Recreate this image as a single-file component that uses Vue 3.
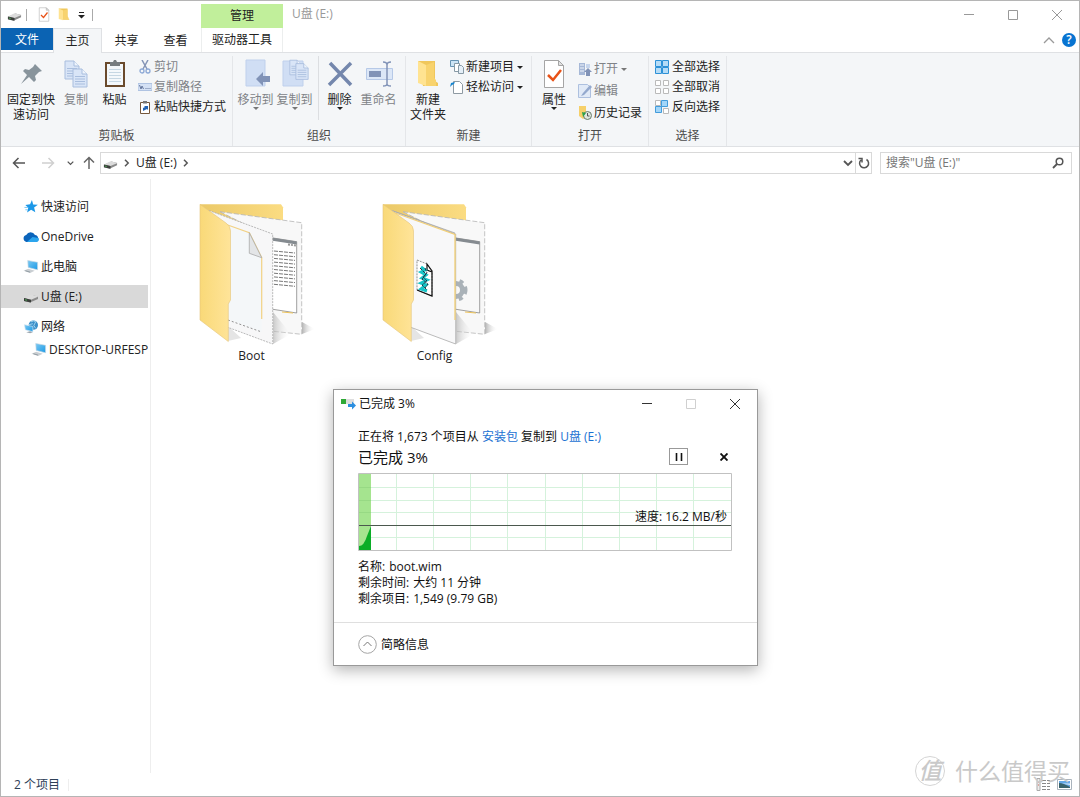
<script setup>
import { ref } from 'vue'

const activeTab = ref('主页')
const tabs = ['主页', '共享', '查看']
const search = ref('')
const selected = ref('U盘 (E:)')
const places = [
  { name: '快速访问', icon: 'star' },
  { name: 'OneDrive', icon: 'cloud' },
  { name: '此电脑', icon: 'pc' },
  { name: 'U盘 (E:)', icon: 'drive' },
  { name: '网络', icon: 'net' },
  { name: 'DESKTOP-URFESPO', icon: 'pc', child: true }
]
const columns = [38, 75, 112, 149, 187, 224, 261, 298, 335]
const rows = [14, 27, 39, 64]
const lines = [0, 1, 2, 3, 4, 5, 6, 7, 8, 9]
</script>

<template>
  <div class="window">
    <svg class="symbols" aria-hidden="true">
      <defs>
        <linearGradient id="cover" x1="0" x2="1"><stop offset="0" stop-color="#f9d978" /><stop offset="1" stop-color="#ffe499" /></linearGradient>
        <linearGradient id="back" x1="0" x2="1"><stop offset="0" stop-color="#ebc968" /><stop offset="1" stop-color="#fbdc82" /></linearGradient>
        <linearGradient id="shade" x1="0" x2="1"><stop offset="0" stop-color="#b4b4b4" /><stop offset="1" stop-color="#ffffff" stop-opacity="0" /></linearGradient>
        <linearGradient id="screen" x1="0" x2="1" y2="1"><stop offset="0" stop-color="#7cc9f2" /><stop offset="1" stop-color="#1c9ae6" /></linearGradient>
      </defs>
      <symbol id="drive" viewBox="0 0 16 14">
        <path d="M1 9 9 5.500l6 1.500v2.500L7 13 1 11.500z" fill="#8b8b8b" />
        <path d="M1 8.500 8 5l7.500 2L8 10.200z" fill="#dcdcdc" />
        <path d="M1 8.500 8 10.200V13l-7-1.600z" fill="#3b3f3b" />
        <path d="M2 10.200l2 .5" stroke="#4fae58" />
      </symbol>
      <symbol id="star" viewBox="0 0 16 16">
        <path d="M9 1l1.300 4.800 5 .2-4 3.100 1.300 5-4.500-2.700-4.300 3 1.300-5.200L2 6.300l5-.6z" fill="#1b98e8" />
        <path d="M1 9h4M2 11.500h2.500" stroke="#75c4f4" />
      </symbol>
      <symbol id="cloud" viewBox="0 0 16 14">
        <path d="M3.500 12.500a3.600 3.600 0 0 1-.3-7A5 5 0 0 1 12 5.500a3.600 3.600 0 0 1 .7 7z" fill="#0b64bb" />
        <path d="M4 12.500 9.500 7.500l6 1A2.600 2.600 0 0 1 13 12.500z" fill="#2ba5ed" />
      </symbol>
      <symbol id="pc" viewBox="0 0 16 16">
        <path d="M4.500 1.500 15 3.500v8L5 9z" fill="url(#screen)" stroke="#c8d8e2" stroke-width=".7" />
        <path d="M0 12.500l5-2 7 2-5 2.500z" fill="#c9ced2" />
        <path d="M2 12.500l5 1.500" stroke="#8d979f" />
      </symbol>
      <symbol id="net" viewBox="0 0 16 16">
        <circle cx="10.500" cy="6.500" r="5" fill="#3b8fc9" />
        <path d="M8 3q3-2 5 0l-2 4 2 3M6 6l4-1" stroke="#a5d5ef" fill="none" />
        <path d="M1 6l9 2v5.500L2 11.500z" fill="url(#screen)" stroke="#d2e4ef" stroke-width=".7" />
        <path d="M3 14l4-1 3 1-3 1.300z" fill="#9aa5ad" />
      </symbol>
      <symbol id="folder" viewBox="0 0 16 16">
        <path d="M2 1h10v11l2 1v1H6z" fill="#efc75b" />
        <path d="M2 1l5 2.500v11L2 13z" fill="#ffe391" />
        <path d="M7 3.500 12 2v8l1 1v2.500H7z" fill="#f8d36e" />
      </symbol>
      <symbol id="tick" viewBox="0 0 24 30">
        <path d="M2.500 1.500h14l5 5v22h-19z" fill="#fff" stroke="#a5a5a5" />
        <path d="M16.500 1.500v5h5z" fill="#e2e2e2" stroke="#a5a5a5" />
        <path d="M6 16l5 5 8-10" fill="none" stroke="#e85218" stroke-width="2.500" />
      </symbol>
      <symbol id="page" viewBox="0 0 16 20">
        <path d="M1 1h9l5 5v13H1z" fill="#d9e5f7" stroke="#a9bede" />
        <path d="M10 1v5h5" fill="#eef4fc" stroke="#a9bede" />
        <path d="M3 8.500h10M3 11h10M3 13.500h10M3 16h10" stroke="#a9bede" />
      </symbol>
      <symbol id="chev" viewBox="0 0 8 8"><path d="M2 .8 5.200 4 2 7.200" fill="none" stroke="currentColor" stroke-width="1.500" /></symbol>
      <symbol id="down" viewBox="0 0 10 8"><path d="M1 2l4 4 4-4" fill="none" stroke="currentColor" stroke-width="1.800" /></symbol>
      <symbol id="min" viewBox="0 0 12 12"><path d="M1 5.500h10" stroke="currentColor" /></symbol>
      <symbol id="max" viewBox="0 0 12 12"><path d="M1.500 1.500h9v9h-9z" fill="none" stroke="currentColor" /></symbol>
      <symbol id="close" viewBox="0 0 12 12"><path d="M1 1l10 10M11 1 1 11" stroke="currentColor" /></symbol>
    </svg>

    <header class="titlebar">
      <div class="quick">
        <svg width="15" height="14"><use href="#drive" /></svg>
        <i class="bar first"></i>
        <button aria-label="属性"><svg width="12" height="15"><use href="#tick" /></svg></button>
        <button aria-label="新建文件夹"><svg width="14" height="15"><use href="#folder" /></svg></button>
        <button aria-label="自定义快速访问工具栏"><svg width="7" height="8" viewBox="0 0 7 8"><path d="M1 1h5v1H1zM0 4h7L3.500 7.500z" fill="#222" /></svg></button>
        <i class="bar"></i>
      </div>
      <div class="context">管理</div>
      <h1>U盘 (E:)</h1>
      <div class="controls">
        <button aria-label="最小化"><svg width="12" height="12"><use href="#min" /></svg></button>
        <button aria-label="最大化"><svg width="12" height="12"><use href="#max" /></svg></button>
        <button aria-label="关闭"><svg width="12" height="12"><use href="#close" /></svg></button>
      </div>
    </header>

    <nav class="tabs">
      <button class="file">文件</button>
      <button v-for="t in tabs" :key="t" class="tab" :class="{ active: activeTab === t }" @click="activeTab = t">{{ t }}</button>
      <button class="tool">驱动器工具</button>
      <div class="help">
        <button aria-label="折叠功能区"><svg width="12" height="8" viewBox="0 0 12 8"><path d="M1 7l5-5 5 5" fill="none" stroke="#9a9a9a" stroke-width="1.300" /></svg></button>
        <button class="question" aria-label="帮助">?</button>
      </div>
    </nav>

    <section class="ribbon">
      <div class="group">
        <div class="tools">
          <button class="big wide">
            <svg viewBox="0 0 30 30"><path d="M19 5l7 7-3 1-4 4 1 4-2 2-5-5-8 7 6-9-4-4 2-2 4 1 4-3z" fill="#88949c" /></svg>
            <span>固定到快<br />速访问</span>
          </button>
          <button class="big narrow off">
            <svg viewBox="0 0 30 30"><use href="#page" x="3" y="1" width="16" height="20" /><use href="#page" x="11" y="9" width="16" height="20" /></svg>
            <span>复制</span>
          </button>
          <button class="big paste">
            <svg viewBox="0 0 30 30"><path d="M6 4h18v23H6z" fill="#f4f8fb" stroke="#6a4a2c" stroke-width="2" /><path d="M9 10.500h12M9 13.500h12M9 16.500h12M9 19.500h12M9 22.500h12" stroke="#c6d7e3" /><path d="M10 3h3l1-2h2l1 2h3v4H10z" fill="#777d80" /></svg>
            <span>粘贴</span>
          </button>
          <div class="stack">
            <button class="small off"><svg viewBox="0 0 14 14"><path d="M4 0l5 9M10 0 5 9" stroke="#8494b6" stroke-width="1.500" /><circle cx="4" cy="11" r="2" fill="none" stroke="#8da9d6" stroke-width="1.300" /><circle cx="10" cy="11" r="2" fill="none" stroke="#8da9d6" stroke-width="1.300" /></svg>剪切</button>
            <button class="small off"><svg viewBox="0 0 14 14"><path d="M0 3.500h14v7H0z" fill="#d4e1f5" stroke="#afc3e2" /><path d="M1.500 5l1.500 4 1-3 1.500 3M7.500 8.500h1M9.500 8.500h1M11.500 8.500h1" fill="none" stroke="#66789e" /></svg>复制路径</button>
            <button class="small"><svg viewBox="0 0 14 14"><path d="M2.500 2.500h9v11h-9z" fill="#fff" stroke="#76583c" /><path d="M5 1h4v2.500H5z" fill="#777" /><path d="M5 11V8l2-1-1-1h4v4L9 9z" fill="#2464b4" /></svg>粘贴快捷方式</button>
          </div>
        </div>
        <footer>剪贴板</footer>
      </div>

      <div class="group organize">
        <div class="tools">
          <button class="big off">
            <svg viewBox="0 0 30 30"><path d="M5 1h19v26H5z" fill="#d0def4" stroke="#bfd0ec" /><path d="M15 20l7-7v4h7v6h-7v4z" fill="#8193b7" /></svg>
            <span>移动到</span><b></b>
          </button>
          <button class="big off">
            <svg viewBox="0 0 30 30"><path d="M3 2h20v25H3z" fill="#d0def4" stroke="#bfd0ec" /><use href="#page" x="9" y="0" width="13" height="17" /><use href="#page" x="15" y="3" width="14" height="19" /></svg>
            <span>复制到</span><b></b>
          </button>
          <i class="divider"></i>
          <button class="big">
            <svg viewBox="0 0 30 30"><path d="M5 4l21 22M26 4 4 26" stroke="#7487ad" stroke-width="3.500" /></svg>
            <span>删除</span><b></b>
          </button>
          <button class="big off">
            <svg viewBox="0 0 30 30"><path d="M2.500 9.500h26v11h-26z" fill="#dce7f7" stroke="#b6c9e7" /><path d="M5 12h12v6H5z" fill="#8193b7" /><path d="M19 3q4 0 4 3v19q0 2-4 2M27 3q-4 0-4 3v19q0 2 4 2" fill="none" stroke="#8193b7" stroke-width="1.500" /></svg>
            <span>重命名</span>
          </button>
        </div>
        <footer>组织</footer>
      </div>

      <div class="group">
        <div class="tools">
          <button class="big create">
            <svg viewBox="0 0 30 30"><path d="M5 2h17v20l3 2v3H10z" fill="#f0c75c" /><path d="M5 2l8 4v21l-8-3z" fill="#ffe391" /><path d="M13 6l8-3v16l2 2v6H13z" fill="#f8d36e" /></svg>
            <span>新建<br />文件夹</span>
          </button>
          <div class="stack">
            <button class="small"><svg viewBox="0 0 14 14"><path d="M.5.5h8v6h-8z" fill="#cce4f5" stroke="#6793b2" /><path d="M4.500 3.500h5v8h-5z" fill="#fff" stroke="#8799a5" /><path d="M8.500 5.500h3l2 2v6h-5z" fill="#e5eff8" stroke="#8799a5" /></svg>新建项目<b></b></button>
            <button class="small"><svg viewBox="0 0 14 14"><path d="M3.500 1.500h6l3 3v9h-9z" fill="#fff" stroke="#8e9aa3" /><path d="M0 7l1-4 4-1-1 2-2 1z" fill="#1685d0" /></svg>轻松访问<b></b></button>
          </div>
        </div>
        <footer>新建</footer>
      </div>

      <div class="group">
        <div class="tools">
          <button class="big create"><svg viewBox="0 0 24 30"><use href="#tick" /></svg><span>属性</span><b></b></button>
          <div class="stack loose">
            <button class="small off"><svg viewBox="0 0 14 14"><path d="M1 1h6v12H1z" fill="#a6b8d7" /><path d="M2 3h4M2 6h4M2 9h4" stroke="#eff4fb" /><path d="M8 2h4v4H8z" fill="#c7d6ed" /><path d="M6 10l4-4 4 4h-2v4H8v-4z" fill="#8193b7" /></svg>打开<b></b></button>
            <button class="small off"><svg viewBox="0 0 14 14"><path d="M.5.500h9l3 3v10H.5z" fill="#e1eaf7" stroke="#adc0df" /><path d="M3 12l2-3 7-8 2 2-8 8z" fill="#94a9ce" /></svg>编辑</button>
            <button class="small"><svg viewBox="0 0 14 14"><path d="M1 0h7v11l-3 2-4-3z" fill="#f6d06a" /><circle cx="9.500" cy="9.500" r="4" fill="#dfe6df" stroke="#687c6a" /><path d="M9.500 7v3h2" fill="none" stroke="#555" /><path d="M4 6l4 1-3 4z" fill="#2ba14b" /></svg>历史记录</button>
          </div>
        </div>
        <footer>打开</footer>
      </div>

      <div class="group">
        <div class="tools select">
          <div class="stack">
            <button class="small"><svg viewBox="0 0 14 14"><path d="M.5.500h6v6h-6zM7.500.500h6v6h-6zM.5 7.500h6v6h-6zM7.500 7.500h6v6h-6z" fill="#b5dcf7" stroke="#2d91d7" /></svg>全部选择</button>
            <button class="small"><svg viewBox="0 0 14 14"><path d="M.5.500h5v5h-5zM8.500.500h5v5h-5zM.5 8.500h5v5h-5zM8.500 8.500h5v5h-5z" fill="#fff" stroke="#bababa" /></svg>全部取消</button>
            <button class="small"><svg viewBox="0 0 14 14"><path d="M.5.500h5v5h-5zM8.500 8.500h5v5h-5z" fill="#fff" stroke="#bababa" /><path d="M6.500.500h6v6h-6zM.5 6.500h6v6h-6z" fill="#a3d6f9" stroke="#439cdb" /></svg>反向选择</button>
          </div>
        </div>
        <footer>选择</footer>
      </div>
    </section>

    <div class="address">
      <button aria-label="后退"><svg width="14" height="12" viewBox="0 0 14 12"><path d="M13 6H1.500M6.500 1l-5 5 5 5" fill="none" stroke="#555" stroke-width="1.500" /></svg></button>
      <button aria-label="前进"><svg width="14" height="12" viewBox="0 0 14 12"><path d="M1 6h11.500M7.500 1l5 5-5 5" fill="none" stroke="#d0d0d0" stroke-width="1.500" /></svg></button>
      <button class="recent" aria-label="最近位置"><svg width="7" height="6"><use href="#down" /></svg></button>
      <button class="up" aria-label="上移"><svg width="12" height="14" viewBox="0 0 12 14"><path d="M6 13V1.500M1 6.500l5-5 5 5" fill="none" stroke="#666" stroke-width="1.500" /></svg></button>
      <div class="path">
        <svg width="15" height="14"><use href="#drive" /></svg>
        <svg width="8" height="8"><use href="#chev" /></svg>
        <a href="#">U盘 (E:)</a>
        <svg width="8" height="8"><use href="#chev" /></svg>
        <button class="drop" aria-label="历史地址"><svg width="10" height="8"><use href="#down" /></svg></button>
        <button class="refresh" aria-label="刷新"><svg width="12" height="12" viewBox="0 0 12 12"><path d="M8.500 2.500a4.500 4.500 0 1 1-5.500.5M.5 1.500H4v4" fill="none" stroke="#555" stroke-width="1.500" /></svg></button>
      </div>
      <label class="search">
        <input v-model="search" type="text" placeholder="搜索&quot;U盘 (E:)&quot;" aria-label="搜索" />
        <svg width="12" height="12" viewBox="0 0 12 12"><circle cx="7.500" cy="4.500" r="3.300" fill="none" stroke="#555" stroke-width="1.500" /><path d="M5 7 1 11" stroke="#555" stroke-width="1.800" /></svg>
      </label>
    </div>

    <main class="body">
      <aside class="side">
        <button v-for="p in places" :key="p.name" class="place" :class="{ child: p.child, current: selected === p.name }" @click="selected = p.name">
          <svg width="16" height="15"><use :href="'#' + p.icon" /></svg><span>{{ p.name }}</span>
        </button>
      </aside>
      <section class="files">
        <figure>
          <svg width="124" height="146" viewBox="0 0 124 146">
            <path d="M112 120l13 7-13 5z" fill="url(#shade)" />
            <path d="M38 124l13 12-13 3z" fill="#e5e5e5" />
            <path d="M10 2.300h81l2 3V40H30z" fill="url(#back)" />
            <path d="M30 9.700l81.700 11v111.600L80 129V35z" fill="#f8f8f8" stroke="#b5b5b5" stroke-width=".8" stroke-dasharray="5 2" />
            <path d="M83 110l18 22-18 10z" fill="url(#shade)" opacity=".7" />
            <path d="M81 35.700l25.700 4V111L81 107z" fill="#fff" stroke="#888" stroke-width=".8" />
            <path d="M81 35.500l25.700 4v3L81 38.500z" fill="#858b90" />
            <path d="M98 42.500l8 1" stroke="#999" stroke-width="2" stroke-dasharray="2 1" />
            <path v-for="n in lines" :key="n" :d="`M84 ${49 + n * 3.700}l21 2`" stroke="#777" stroke-width="1" stroke-dasharray="4 1" />
            <path d="M92 110l11 1" stroke="#efc45a" />
            <path d="M19 8.500 82.700 32v110L37 125z" fill="#f7f7f8" stroke="#a9a9a9" stroke-width=".8" stroke-dasharray="2 1" />
            <path d="M35 22l24.300 8.700 12.400 25V130L38 117z" fill="#f4f7f9" />
            <path d="M38 118l33.700 12" stroke="#777" stroke-width=".8" stroke-dasharray="2 2" />
            <path d="M35 22l24.300 8.700 12.400 25V117" fill="none" stroke="#f2d183" stroke-width="1.200" />
            <path d="M59.300 30.700v20.600l12.400 4.400z" fill="#e3e5e7" stroke="#aaa" stroke-width=".8" />
            <path d="M10 2.300 36 21q4.500 3 4.500 8v69l-2.200 4v37.500L10 118z" fill="url(#cover)" stroke="#e4c57b" stroke-width=".6" />
          </svg>
          <figcaption>Boot</figcaption>
        </figure>
        <figure>
          <svg width="124" height="146" viewBox="0 0 124 146">
            <path d="M112 120l13 7-13 5z" fill="url(#shade)" />
            <path d="M38 124l13 12-13 3z" fill="#e5e5e5" />
            <path d="M10 2.300h81l2 3V40H30z" fill="url(#back)" />
            <path d="M30 9.700l81.700 11v111.600L80 129V35z" fill="#f8f8f8" stroke="#b5b5b5" stroke-width=".8" stroke-dasharray="5 2" />
            <path d="M83 110l18 22-18 10z" fill="url(#shade)" opacity=".7" />
            <path d="M81 35.700l25.700 4V111L81 107z" fill="#f8f8f8" stroke="#888" stroke-width=".8" />
            <path d="M81 35.500l25.700 4v3L81 38.500z" fill="#858b90" />
            <circle cx="83" cy="88" r="6.500" fill="none" stroke="#aab2b8" stroke-width="5" />
            <circle cx="83" cy="88" r="9.500" fill="none" stroke="#aab2b8" stroke-width="4" stroke-dasharray="4 4" />
            <path d="M92 110l11 1" stroke="#efc45a" />
            <path d="M19 8.500 82.700 32v110L37 125z" fill="#f8f8f9" stroke="#a9a9a9" stroke-width=".8" />
            <path d="M21 10.500l61 22V118" fill="none" stroke="#f2cf76" stroke-width="1.300" />
            <path d="M20 9l62 22" stroke="#aaa" stroke-width=".8" />
            <path d="M44 58l10 4 5 8v24l-15-6z" fill="#fff" stroke="#777" stroke-width=".8" stroke-dasharray="2 1" />
            <path d="M44 88l15 6V69l-5-7v6l5 2" fill="none" stroke="#111" stroke-width="1.200" />
            <path d="M48 65l4 3-4 2 5 3-4 3 5 2-6 3 5 2-5 4 6 2" fill="none" stroke="#16c5c8" stroke-width="3" />
            <path d="M47 66l6 6-3 3 4 4-5 4 5 5M52 66l2 5-5 6 6 5-3 4" fill="none" stroke="#223" stroke-width=".9" stroke-dasharray="3 1" />
            <path d="M10 2.300 36 21q4.500 3 4.500 8v69l-2.200 4v37.500L10 118z" fill="url(#cover)" stroke="#e4c57b" stroke-width=".6" />
          </svg>
          <figcaption>Config</figcaption>
        </figure>
      </section>
    </main>

    <footer class="status">
      <span class="count">2 个项目</span>
      <div class="views">
        <button aria-label="详细信息"><svg width="15" height="13" viewBox="0 0 15 13"><path d="M1 .500h3v12H1z" fill="#eee" stroke="#aaa" /><path d="M2 4h1M2 7h1" stroke="#d06050" /><path d="M6 2.500h4M11 2.500h3M6 5.500h4M11 5.500h3M6 8.500h4M11 8.500h3M6 11.500h4M11 11.500h3" stroke="#888" /></svg></button>
        <button aria-label="大图标"><svg width="15" height="13" viewBox="0 0 15 13"><path d="M.5 1.500h14v10H.5z" fill="#fff" stroke="#aab4bd" /><path d="M2 3h11v7H2z" fill="#63a7e6" /><path d="M2 5q4 0 11 4v1H2z" fill="#39626a" /><path d="M5 5.500h8V7z" fill="#ddecf7" /></svg></button>
      </div>
    </footer>

    <div class="watermark"><span class="seal">值</span><span>什么值得买</span></div>

    <section class="dialog" role="dialog" aria-label="已完成 3%">
      <header>
        <svg width="15" height="12" viewBox="0 0 15 12"><path d="M0 1h5v5H0z" fill="#2fa936" /><path d="M5 1h8v5H5z" fill="#dedede" /><path d="M7 6h4V3.500l4 4-4 4V9H7z" fill="#2d8fe0" /></svg>
        <h2>已完成 3%</h2>
        <div class="controls">
          <button aria-label="最小化"><svg width="12" height="12"><use href="#min" /></svg></button>
          <button class="faint" disabled aria-label="最大化"><svg width="12" height="12"><use href="#max" /></svg></button>
          <button aria-label="关闭"><svg width="12" height="12"><use href="#close" /></svg></button>
        </div>
      </header>
      <div class="content">
        <p class="summary">正在将 1,673 个项目从 <a href="#">安装包</a> 复制到 <a href="#">U盘 (E:)</a></p>
        <div class="progress">
          <strong>已完成 3%</strong>
          <button class="pause" aria-label="暂停"><svg width="8" height="8" viewBox="0 0 8 8"><path d="M1.500 0v8M6.500 0v8" stroke="#111" stroke-width="1.600" /></svg></button>
          <button class="cancel" aria-label="取消"><svg width="8" height="8" viewBox="0 0 8 8"><path d="M.5.5l7 7M7.500.5l-7 7" stroke="#111" stroke-width="1.900" /></svg></button>
        </div>
        <div class="chart">
          <svg viewBox="0 0 374 78" preserveAspectRatio="none">
            <path v-for="x in columns" :key="'c' + x" :d="`M${x}.5 0v78`" stroke="#d5f2dc" />
            <path v-for="y in rows" :key="'r' + y" :d="`M0 ${y}.5h374`" stroke="#d5f2dc" />
            <path d="M1 1h12v76H1z" fill="#a5e48f" />
            <path d="M1 14.500h12M1 27.500h12M1 39.500h12" stroke="#97d984" />
            <path d="M1 77v-4q5 0 8-10l4-10v24z" fill="#0aad27" />
            <path d="M0 52.500h374" stroke="#4b584e" />
            <path d="M.5.500h373v77H.5z" fill="none" stroke="#c1c1c1" />
          </svg>
          <span>速度: 16.2 MB/秒</span>
        </div>
        <dl>
          <div><dt>名称:</dt><dd>boot.wim</dd></div>
          <div><dt>剩余时间:</dt><dd>大约 11 分钟</dd></div>
          <div><dt>剩余项目:</dt><dd>1,549 (9.79 GB)</dd></div>
        </dl>
      </div>
      <footer>
        <button><svg width="19" height="19" viewBox="0 0 19 19"><circle cx="9.500" cy="9.500" r="8.800" fill="#fff" stroke="#a5a5a5" /><path d="M5.500 11l4-4 4 4" fill="none" stroke="#777" /></svg>简略信息</button>
      </footer>
    </section>
  </div>
</template>

<style>
body { margin: 0; background: #fff; }
</style>

<style scoped>
* { box-sizing: border-box; }
.window { position: relative; display: flex; flex-direction: column; min-height: 100vh; border: 1px solid #b5b5b5; background: #fff; color: #222; font: 12px/16px "Open Sans", "Noto Sans CJK SC", sans-serif; overflow: hidden; }
.symbols { position: absolute; width: 0; height: 0; }
svg { display: block; flex: none; }
button { display: flex; align-items: center; justify-content: center; padding: 0; border: 0; background: none; color: inherit; font: inherit; white-space: nowrap; }
a { color: inherit; text-decoration: none; }
h1, h2, p, dl, dd, figure { margin: 0; font-size: 12px; font-weight: 400; }
.titlebar { display: flex; height: 27px; }
.quick { display: flex; align-items: center; width: 200px; gap: 7px; padding-left: 6px; }
.bar { width: 1px; height: 12px; background: #aaa; }
.bar.first { margin: 0 4px 0 -3px; }
.context { display: flex; align-items: center; justify-content: center; width: 82px; margin-top: 3px; background: #c1ef9b; }
h1 { padding: 5px 0 0 9px; color: #999; }
.controls { display: flex; margin-left: auto; color: #999; }
.controls button { width: 44px; }
.tabs { display: flex; height: 25px; box-shadow: inset 0 -1px #dfe1e4; }
.file { width: 52px; height: 22px; padding-top: 2px; background: #0b63b3; color: #fff; }
.tab { width: 49px; }
.tab.active { border: solid #dfe1e4; border-width: 1px 1px 0; background: #f4f6f8; }
.tool { width: 82px; height: 24px; margin-left: 1px; border: solid #eceeee; border-width: 0 1px; }
.help { display: flex; gap: 7px; height: 24px; margin-left: auto; padding-right: 3px; align-items: center; }
.question { width: 14px; height: 14px; border-radius: 50%; background: #0874d1; color: #fff; font-weight: 600; line-height: 14px; }
.ribbon { display: grid; grid-template-columns: 232px 173px 126px 117px 78px; height: 94px; border-bottom: 1px solid #dfe1e4; background: #f4f6f8; }
.group { display: flex; flex-direction: column; border-right: 1px solid #e4e6e9; margin-top: 3px; }
.tools { display: flex; flex: 1; }
.group footer { text-align: center; line-height: 20px; color: #4c4c4c; }
.big { flex-direction: column; justify-content: flex-start; width: 39px; height: 68px; padding-top: 3px; line-height: 15px; }
.big svg { width: 30px; height: 30px; }
.big span { margin-top: 3px; }
.wide { width: 60px; }
.narrow { width: 30px; }
.paste { width: 47px; }
.create { width: 44px; }
.off { color: #808387; }
b { border: solid transparent; border-width: 3px 3px 0; border-top-color: #222; }
.off b { border-top-color: #777; }
.stack { display: flex; flex-direction: column; padding-top: 1px; }
.small { justify-content: flex-start; height: 20px; gap: 2px; }
.small svg { width: 14px; height: 14px; }
.small b { margin-left: 1px; }
.loose { padding: 2px 0 0 2px; }
.loose .small { height: 22px; }
.organize .tools { padding-left: 3px; }
.divider { width: 1px; height: 64px; margin: 0 1px 0 4px; background: #dcdee1; }
.select { padding-left: 6px; }
.select .small { gap: 3px; }
.address { display: flex; align-items: center; height: 32px; padding: 0 7px 0 3px; color: #555; }
.address > button { width: 29px; height: 22px; }
.address > .recent { width: 16px; }
.address > .up { width: 22px; }
.path { display: flex; flex: 1; align-items: center; height: 22px; gap: 5px; padding-left: 2px; border: 1px solid #d9d9d9; }
.path a { color: #222; }
.drop { width: 14px; margin-left: auto; }
.refresh { width: 16px; height: 20px; margin-left: -5px; border-left: 1px solid #d9d9d9; }
.search { display: flex; align-items: center; width: 192px; height: 22px; margin-left: 8px; padding: 0 7px 0 5px; border: 1px solid #d9d9d9; }
.search input { flex: 1; min-width: 0; padding: 0; border: 0; outline: 0; font: inherit; }
.search input::placeholder { color: #777; opacity: 1; }
.body { display: flex; flex: 1; }
.side { display: flex; flex-direction: column; width: 150px; gap: 7px; padding: 16px 2px 0 0; border-right: 1px solid #eee; }
.place { justify-content: flex-start; height: 23px; gap: 2px; padding-left: 22px; overflow: hidden; }
.place.current { background: #d9d9d9; }
.place.child { margin-top: -7px; padding-left: 30px; }
.files { display: flex; flex: 1; flex-wrap: wrap; align-content: flex-start; padding: 23px 0 0 9px; }
figure { display: flex; flex-direction: column; align-items: center; width: 183px; }
.status { display: flex; align-items: center; justify-content: space-between; height: 23px; padding: 0 7px 0 13px; color: #2e4057; }
.count { padding-right: 8px; border-right: 1px solid #eee; line-height: 12px; }
.views { display: flex; gap: 6px; }
.watermark { position: absolute; right: 9px; bottom: 9px; display: flex; align-items: center; gap: 10px; color: #c9c9c9; font-size: 23px; line-height: 32px; pointer-events: none; }
.seal { width: 30px; height: 30px; border: 1px solid #d5d5d5; border-radius: 50%; text-align: center; line-height: 27px; font-style: italic; font-weight: 500; }
.dialog { position: absolute; left: 332px; top: 388px; width: 425px; border: 1px solid #999; background: #fff; box-shadow: 0 4px 14px rgba(0, 0, 0, .3); color: #111; }
.dialog header { display: flex; align-items: center; height: 27px; padding-left: 7px; gap: 3px; }
.dialog .controls { color: #333; }
.dialog .controls .faint { color: #d0d0d0; }
.content { padding: 12px 25px 15px 24px; }
.summary a { color: #1b71d2; }
.progress { display: flex; align-items: center; height: 23px; }
.progress strong { flex: 1; font-size: 15px; font-weight: 400; }
.pause { width: 19px; height: 17px; border: 1px solid #999; }
.cancel { width: 17px; height: 17px; margin-left: 27px; }
.chart { position: relative; margin-top: 5px; }
.chart svg { width: 100%; height: 78px; }
.chart span { position: absolute; right: 5px; bottom: 26px; }
dl { padding-top: 8px; }
dl div { display: flex; gap: 4px; }
.dialog > footer { padding: 12px 24px 11px; border-top: 1px solid #dfdfdf; }
.dialog > footer button { gap: 4px; }
</style>
